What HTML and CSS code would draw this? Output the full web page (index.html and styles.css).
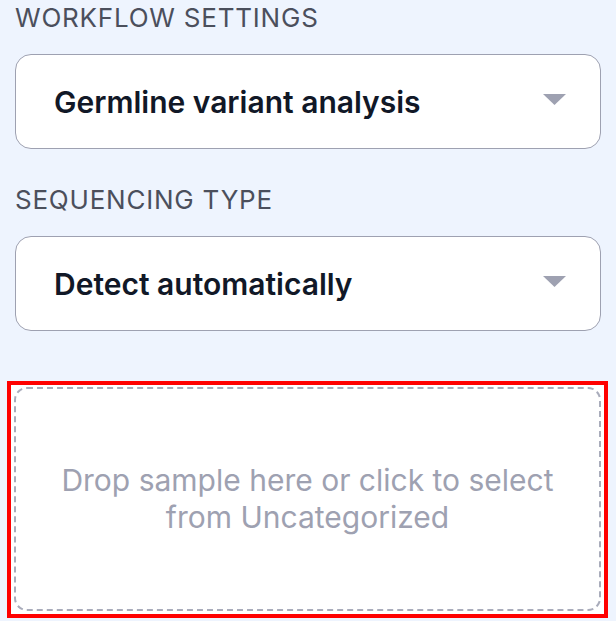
FILE: index.html
```html
<!DOCTYPE html>
<html lang="en">
<head>
<meta charset="utf-8">
<title>Workflow settings</title>
<link rel="stylesheet" href="styles.css">
</head>
<body>
<main class="panel">
  <section class="field">
    <div class="field-label">Workflow settings</div>
    <div class="select">
      <span class="select-value">Germline variant analysis</span>
      <svg class="caret" width="23" height="11" viewBox="0 0 23 11"><polygon points="0,0 23,0 11.5,11"/></svg>
    </div>
  </section>
  <section class="field">
    <div class="field-label">Sequencing type</div>
    <div class="select">
      <span class="select-value">Detect automatically</span>
      <svg class="caret" width="23" height="11" viewBox="0 0 23 11"><polygon points="0,0 23,0 11.5,11"/></svg>
    </div>
  </section>
  <div class="drop-highlight">
    <div class="dropzone">
      <p class="drop-text">Drop sample here or click to select<br>from Uncategorized</p>
    </div>
  </div>
</main>
</body>
</html>
```
FILE: styles.css
```css
html, body {
  margin: 0;
  padding: 0;
}
body {
  background: #eef4fe;
  font-family: Inter, "Noto Sans", sans-serif;
  width: 616px;
  height: 621px;
  overflow: hidden;
}
.panel {
  padding: 2px 15px 0 15px;
  display: flex;
  flex-direction: column;
}
.field {
  display: flex;
  flex-direction: column;
  gap: 20px;
  margin-bottom: 35px;
}
.field:last-of-type {
  margin-bottom: 0;
}
.field-label {
  font-size: 26px;
  line-height: 32px;
  text-transform: uppercase;
  letter-spacing: 0.03em;
  color: #4b4f5c;
  font-weight: 400;
}
.select {
  height: 95px;
  box-sizing: border-box;
  border: 1.5px solid #9ea1b1;
  border-radius: 16px;
  background: #ffffff;
  display: flex;
  align-items: center;
  justify-content: space-between;
  padding: 0 34px 0 38px;
}
.select-value {
  font-size: 30px;
  font-weight: 600;
  color: #111827;
}
.caret {
  fill: #9ea1b1;
  margin-top: -4px;
}
.drop-highlight {
  margin: 50px -7px 0 -8px;
  border: 4px solid #ff0000;
  background: #ffffff;
  padding: 2px 3px 3px 3px;
}
.dropzone {
  height: 224px;
  box-sizing: border-box;
  border: 2px dashed #a9acbb;
  border-radius: 13px;
  display: flex;
  align-items: center;
  justify-content: center;
}
.drop-text {
  margin: 0;
  font-size: 30px;
  line-height: 37px;
  text-align: center;
  color: #9ea1b1;
}
```
